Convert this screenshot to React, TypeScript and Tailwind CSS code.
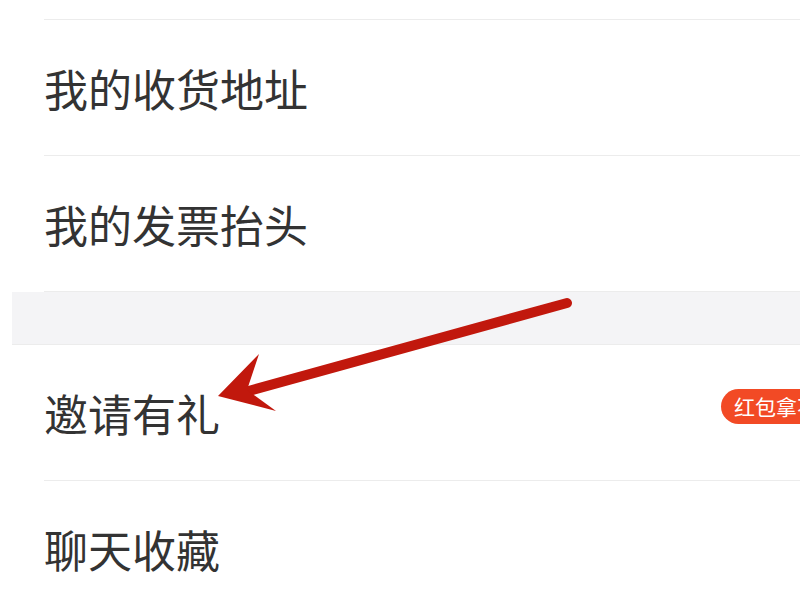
import React from 'react';

const font = { fontFamily: '"Noto Sans CJK SC", "Noto Sans", sans-serif' };

function Row({ label, children }: { label: string; children?: React.ReactNode }) {
  return (
    <div className="pl-[44px]">
      <div className="relative flex h-[136px] items-center border-b border-[#ececec]">
        <span className="text-[44px] leading-none text-[#333333]">{label}</span>
        {children}
      </div>
    </div>
  );
}

export default function App() {
  return (
    <div className="relative h-[600px] w-[800px] overflow-hidden bg-white" style={font}>
      <div className="ml-[44px] h-[20px] border-b border-[#ececec]" />
      <Row label="我的收货地址" />
      <Row label="我的发票抬头" />
      <div className="ml-[12px] h-[53px] border-b border-[#ececec] bg-[#f4f4f6]" />
      <Row label="邀请有礼">
        <span className="absolute left-[677px] top-[44px] flex h-[35px] items-center whitespace-nowrap rounded-full bg-[#f24a25] px-[13px] text-[21px] text-white">
          红包拿不停
        </span>
      </Row>
      <Row label="聊天收藏" />

      {/* annotation arrow */}
      <svg className="pointer-events-none absolute left-0 top-0" width="800" height="600">
        <line x1="567" y1="303" x2="245" y2="392" stroke="#c1180d" strokeWidth="10" strokeLinecap="round" />
        <polygon points="218,396 259,354 247,390 276,411" fill="#c1180d" />
      </svg>
    </div>
  );
}
